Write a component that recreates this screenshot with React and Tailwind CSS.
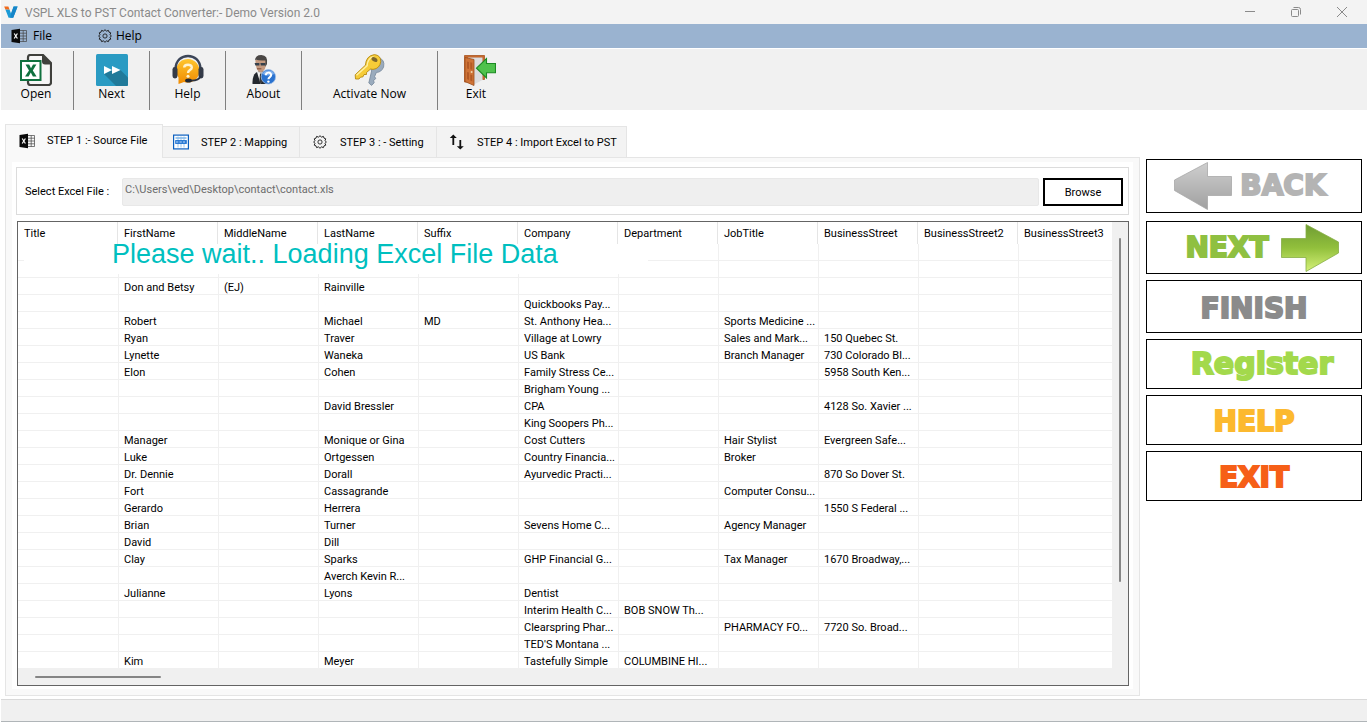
import React, { useState } from 'react';

const LogoIcon = () => (
	<svg viewBox="0 0 14 12" aria-hidden="true" className="h-3 w-3.5">
		<path d="M0.2 0.4H4.4L5.6 3.8L1.4 3.6z" fill="#f26a1b" />
		<path d="M1.4 3.6L5.6 3.8L7 7.6L9.6 0.6H13.6L9.2 11.8H4.6z" fill="#1b9ad6" />
		<path d="M9.6 0.6H13.6L9.2 11.8H6.2L7.4 7z" fill="#1685c8" />
	</svg>
);

const SheetIcon = () => (
	<svg viewBox="0 0 16 16" aria-hidden="true" className="h-4 w-4">
		<path d="M0.5 2L9 0.8V15.2L0.5 14z" fill="#0a0a0a" />
		<path d="M3.2 5.5L6.4 10.5M6.4 5.5L3.2 10.5" stroke="#fff" strokeWidth="1.2" />
		<path d="M9 2.5H15.5V13.5H9M9 5.2H15.5M9 8H15.5M9 10.8H15.5M12.2 2.5V13.5" fill="none" stroke="#444" strokeWidth="0.7" />
	</svg>
);

const GearIcon = () => (
	<svg viewBox="0 0 16 16" aria-hidden="true" className="h-3.5 w-3.5" fill="none" stroke="#1a1a1a">
		<path
			d="M8 0.8L9.7 2.4L11.9 1.6L12.6 3.6L14.6 4.4L13.8 6.4L15.2 8L13.8 9.6L14.6 11.6L12.6 12.4L11.9 14.4L9.7 13.6L8 15.2L6.3 13.6L4.1 14.4L3.4 12.4L1.4 11.6L2.2 9.6L0.8 8L2.2 6.4L1.4 4.4L3.4 3.6L4.1 1.6L6.3 2.4z"
			strokeWidth="1.1"
			strokeLinejoin="round"
		/>
		<circle cx="8" cy="8" r="2.4" strokeWidth="1" />
	</svg>
);

const MappingIcon = () => (
	<svg viewBox="0 0 16 15" aria-hidden="true" className="h-4 w-4">
		<rect x="0.6" y="0.6" width="14.8" height="13.8" fill="#fff" stroke="#0b5fbf" strokeWidth="1.2" />
		<path d="M2.5 3.5H13.5" stroke="#5aa2e2" strokeWidth="1.2" />
		<path d="M5 2V13M8 2V13M11 2V13" stroke="#8fc0ee" strokeWidth="0.9" />
		<rect x="2.2" y="5.6" width="11.6" height="3.8" fill="#1a6fd0" />
		<path d="M3 7.5H13" stroke="#cfe4fa" strokeWidth="1" strokeDasharray="2.4 1" />
	</svg>
);

const ArrowsIcon = () => (
	<svg viewBox="0 0 16 16" aria-hidden="true" className="h-4 w-4">
		<path d="M4.3 0.5L7.8 4H5.2V11H3.4V4H0.8z" fill="#111" />
		<path d="M11.3 15.5L14.8 12.2H12.2V6H10.4V12.2H7.8z" fill="#111" />
	</svg>
);

const OpenIcon = () => (
	<svg viewBox="0 0 32 32" aria-hidden="true" className="h-8 w-8">
		<path d="M8 6V3.5Q8 1 10.5 1H23L31 9V28.5Q31 31 28.5 31H10.5Q8 31 8 28.5V27" fill="#f6f6f6" stroke="#3f403c" strokeWidth="2.2" />
		<path d="M22 0.5L31.8 10.5H25Q22 10.5 22 7.5z" fill="#3f403c" />
		<rect x="1" y="7" width="19.5" height="19" fill="#fff" stroke="#10713f" strokeWidth="2" />
		<path d="M5.5 10.5H9.2L11 14.3L13 10.5H16.4L12.8 16.4L16.6 22.5H12.9L10.8 18.6L8.6 22.5H5L9 16.4z" fill="#10713f" />
	</svg>
);

const NextIcon = () => (
	<svg viewBox="0 0 32 32" aria-hidden="true" className="h-8 w-8">
		<rect width="32" height="32" rx="1.5" fill="#2a9bc3" />
		<path d="M8 20L16 16L24.5 16L32 23.5V30.5Q32 32 30.5 32H20z" fill="#217a9a" />
		<path d="M8 12L16 16L8 20zM16 12L24.5 16L16 20z" fill="#fff" />
	</svg>
);

const HeadsetIcon = () => (
	<svg viewBox="0 0 32 32" aria-hidden="true" className="h-8 w-8">
		<defs>
			<linearGradient id="bubble" x1="0" y1="0" x2="0" y2="1">
				<stop offset="0" stopColor="#ffc62e" />
				<stop offset="1" stopColor="#f08a00" />
			</linearGradient>
		</defs>
		<path d="M16 5A11.6 11.6 0 0 0 6.5 23.5L6.5 30L12 28A11.8 11.8 0 1 0 16 5z" fill="url(#bubble)" />
		<path d="M3.6 15C3.6 -2.4 28.4 -2.4 28.4 15" fill="none" stroke="#3b4558" strokeWidth="2.4" />
		<path d="M12.2 13.6C12.2 9.8 19.8 9.8 19.8 13.4C19.8 16.2 16 16 16 19" fill="none" stroke="#fff3cf" strokeWidth="2.4" />
		<circle cx="16" cy="22.2" r="1.5" fill="#fff3cf" />
		<rect x="0.5" y="13" width="5" height="11.5" rx="2.4" fill="#343b48" />
		<rect x="26.5" y="13" width="5" height="11.5" rx="2.4" fill="#343b48" />
		<path d="M28.5 22Q27 27 18 26.6" fill="none" stroke="#2c3340" strokeWidth="1.8" />
		<ellipse cx="16.5" cy="26.4" rx="3.4" ry="2" fill="#222833" />
	</svg>
);

const PersonIcon = () => (
	<svg viewBox="0 0 32 32" aria-hidden="true" className="ml-px h-8 w-8">
		<path d="M4.5 30Q4 18.5 11 17.5H17Q23 19 22 30z" fill="#23272e" />
		<path d="M9 18L12.6 30L17 18.5z" fill="#f4f4f4" />
		<path d="M12 19.5H13.8L14.2 27.5L12.8 30L11.4 27.5z" fill="#3a3a3a" />
		<path d="M7.4 6Q7.4 17 12.6 18.5Q18.6 17 18.2 6z" fill="#c49a80" />
		<path d="M7 6.6Q7 1 13.4 1Q20.2 1.2 19 10L17.4 13V6.4Q12 7 7 5.5z" fill="#4a4745" />
		<path d="M6.6 9H11.4V11.4H7.4zM12.4 9H17.4V11.4H12.8z" fill="#34404c" />
		<path d="M9 14.8H13.4" stroke="#7e4a38" strokeWidth="1" />
		<circle cx="20.4" cy="22.8" r="7.2" fill="#2a72cf" stroke="#9dbce6" strokeWidth="0.8" />
		<path d="M14.6 20Q16.4 16.6 20.4 16.6T26.2 20Q20.4 23 14.6 20z" fill="#7fb0ee" />
		<path d="M17.8 21.2C17.8 17.8 23.2 17.8 23.2 21C23.2 23.2 20.4 23 20.4 25.2" fill="none" stroke="#fff" strokeWidth="2" />
		<circle cx="20.4" cy="27.6" r="1.2" fill="#fff" />
	</svg>
);

const KeysIcon = () => (
	<svg viewBox="0 0 32 32" aria-hidden="true" className="h-8 w-8">
		<path d="M23 3Q31.4 5 29.6 13Q27.4 18.4 22.4 18.4L20.6 22.6L21.8 24.6L19.6 26.4L20.2 28.8L17.6 31.4L14.8 29L17.6 17L16 13z" fill="#9aabbd" stroke="#75879a" strokeWidth="0.8" />
		<path d="M20.4 0.6Q26.6 1.2 26.8 7.2Q26 14.6 19 15.4L16.6 15L12.5 18.5V20.5H10L9 22.8L6.5 23.2L5 25H1.5L1.2 20.8L11.4 11.2Q12 1.8 20.4 0.6z" fill="#f6cc38" stroke="#b78a12" strokeWidth="0.9" />
		<path d="M2.5 21.3L13.2 11.6Q13.4 4.4 19.5 2.6" fill="none" stroke="#fff0a0" strokeWidth="1.4" />
		<ellipse cx="20.5" cy="5.6" rx="3.2" ry="2" fill="#7d682c" transform="rotate(30 20.5 5.6)" />
	</svg>
);

const DoorIcon = () => (
	<svg viewBox="0 0 32 32" aria-hidden="true" className="ml-2 h-8 w-8">
		<path d="M0.5 1.5H20.5V25.5H18.5V4H4V28H0.5z" fill="#c7682c" stroke="#a85420" strokeWidth="0.8" />
		<path d="M4 3.6H18.5V26L10 30.5z" fill="#dcdcde" />
		<path d="M1 3.5L10 5.5V31.5L1 27.5z" fill="#cf7438" stroke="#9c4e1c" strokeWidth="0.8" />
		<path d="M3 7.5L5 8V15L3 14.6zM6.3 8.3L8.3 8.8V15.8L6.3 15.3zM3 18L5 18.6V26L3 25zM6.3 20.5L8.3 21V27.5L6.3 26.6z" fill="#b35a26" />
		<circle cx="7.6" cy="18" r="1" fill="#f2d9b0" />
		<path d="M12.5 14.2L22.5 4.5V9.5H31.5V18.8H22.5V24z" fill="#4fc24c" stroke="#1c8a23" strokeWidth="1.1" />
	</svg>
);

const BackArrow = () => (
	<svg viewBox="0 0 58 48" aria-hidden="true" className="h-12 w-[58px]">
		<defs>
			<linearGradient id="grayArrow" x1="0" y1="0" x2="0" y2="1">
				<stop offset="0" stopColor="#cfcfcf" />
				<stop offset="1" stopColor="#a0a0a0" />
			</linearGradient>
		</defs>
		<path d="M0.5 18L33.5 0.5V14.5H57.5V33.5H33.5V47.5L0.5 28.5z" fill="url(#grayArrow)" stroke="#a8a8a8" strokeWidth="0.8" />
	</svg>
);

const NextArrow = () => (
	<svg viewBox="0 0 58 48" aria-hidden="true" className="h-12 w-[58px]">
		<defs>
			<linearGradient id="greenArrow" x1="0" y1="0" x2="0" y2="1">
				<stop offset="0" stopColor="#6f9c33" />
				<stop offset="0.5" stopColor="#92c03c" />
				<stop offset="1" stopColor="#d6f27a" />
			</linearGradient>
		</defs>
		<path d="M57.5 18L25 0.5V14.5H0.5V33.5H25V47.5L57.5 29z" fill="url(#greenArrow)" stroke="#86ad45" strokeWidth="0.8" />
	</svg>
);

const tools = [
	{ label: 'Open', icon: OpenIcon, width: 'w-[73px] border-r pr-0.5' },
	{ label: 'Next', icon: NextIcon, width: 'w-[76px] border-r' },
	{ label: 'Help', icon: HeadsetIcon, width: 'w-[76px] border-r' },
	{ label: 'About', icon: PersonIcon, width: 'w-[76px] border-r' },
	{ label: 'Activate Now', icon: KeysIcon, width: 'w-[136px] border-r' },
	{ label: 'Exit', icon: DoorIcon, width: 'w-[76px]' },
];

const tabs = [
	{ label: 'STEP 1 :- Source File', icon: SheetIcon, width: 'w-[158px] pl-[13px]' },
	{ label: 'STEP 2 : Mapping', icon: MappingIcon, width: 'w-[137px] pl-2.5' },
	{ label: 'STEP 3 : - Setting', icon: GearIcon, width: 'w-[137px] pl-3' },
	{ label: 'STEP 4 : Import Excel to PST', icon: ArrowsIcon, width: 'w-[190px] pl-3' },
];

const columns = [
	'Title',
	'FirstName',
	'MiddleName',
	'LastName',
	'Suffix',
	'Company',
	'Department',
	'JobTitle',
	'BusinessStreet',
	'BusinessStreet2',
	'BusinessStreet3',
];

const contacts = [
	{},
	{},
	{ FirstName: 'Don and Betsy', MiddleName: '(EJ)', LastName: 'Rainville' },
	{ Company: 'Quickbooks Pay...' },
	{ FirstName: 'Robert', LastName: 'Michael', Suffix: 'MD', Company: 'St. Anthony Hea...', JobTitle: 'Sports Medicine ...' },
	{ FirstName: 'Ryan', LastName: 'Traver', Company: 'Village at Lowry', JobTitle: 'Sales and Mark...', BusinessStreet: '150 Quebec St.' },
	{ FirstName: 'Lynette', LastName: 'Waneka', Company: 'US Bank', JobTitle: 'Branch Manager', BusinessStreet: '730 Colorado Bl...' },
	{ FirstName: 'Elon', LastName: 'Cohen', Company: 'Family Stress Ce...', BusinessStreet: '5958 South Ken...' },
	{ Company: 'Brigham Young ...' },
	{ LastName: 'David Bressler', Company: 'CPA', BusinessStreet: '4128 So. Xavier ...' },
	{ Company: 'King Soopers Ph...' },
	{ FirstName: 'Manager', LastName: 'Monique or Gina', Company: 'Cost Cutters', JobTitle: 'Hair Stylist', BusinessStreet: 'Evergreen Safe...' },
	{ FirstName: 'Luke', LastName: 'Ortgessen', Company: 'Country Financia...', JobTitle: 'Broker' },
	{ FirstName: 'Dr. Dennie', LastName: 'Dorall', Company: 'Ayurvedic Practi...', BusinessStreet: '870 So Dover St.' },
	{ FirstName: 'Fort', LastName: 'Cassagrande', JobTitle: 'Computer Consu...' },
	{ FirstName: 'Gerardo', LastName: 'Herrera', BusinessStreet: '1550 S Federal ...' },
	{ FirstName: 'Brian', LastName: 'Turner', Company: 'Sevens Home C...', JobTitle: 'Agency Manager' },
	{ FirstName: 'David', LastName: 'Dill' },
	{ FirstName: 'Clay', LastName: 'Sparks', Company: 'GHP Financial G...', JobTitle: 'Tax Manager', BusinessStreet: '1670 Broadway,...' },
	{ LastName: 'Averch Kevin R...' },
	{ FirstName: 'Julianne', LastName: 'Lyons', Company: 'Dentist' },
	{ Company: 'Interim Health C...', Department: 'BOB SNOW Th...' },
	{ Company: 'Clearspring Phar...', JobTitle: 'PHARMACY FO...', BusinessStreet: '7720 So. Broad...' },
	{ Company: "TED'S Montana ..." },
	{ FirstName: 'Kim', LastName: 'Meyer', Company: 'Tastefully Simple', Department: 'COLUMBINE HI...' },
];

const TitleBar = () => (
	<header className="flex h-6 items-center bg-[#f3f3f3] pr-0.5 pl-[3px] font-[Roboto,sans-serif] text-xs text-[#8a8a8a]">
		<LogoIcon />
		<h1 className="ml-[7px] flex-1 pt-0.5">VSPL XLS to PST Contact Converter:- Demo Version 2.0</h1>
		<div className="flex">
			<button type="button" aria-label="Minimize" className="flex h-6 w-[46px] items-center justify-center">
				<svg viewBox="0 0 12 12" className="h-3 w-3" fill="none" stroke="#8a8a8a"><path d="M1 5.5H11" /></svg>
			</button>
			<button type="button" aria-label="Restore" className="flex h-6 w-[46px] items-center justify-center">
				<svg viewBox="0 0 12 12" className="h-3 w-3" fill="none" stroke="#8a8a8a">
					<rect x="1.5" y="3.5" width="7" height="7" rx="1" />
					<path d="M3.5 1.5H8.5Q10.5 1.5 10.5 3.5V8.5" />
				</svg>
			</button>
			<button type="button" aria-label="Close" className="flex h-6 w-[46px] items-center justify-center">
				<svg viewBox="0 0 12 12" className="h-3 w-3" fill="none" stroke="#8a8a8a"><path d="M1 1L11 11M11 1L1 11" /></svg>
			</button>
		</div>
	</header>
);

const MenuBar = () => (
	<nav className="flex h-6 bg-[#9ab3d0] pl-2.5 text-xs">
		<button type="button" className="flex w-[87px] items-center gap-1.5"><SheetIcon />File</button>
		<button type="button" className="flex items-center gap-1"><GearIcon />Help</button>
	</nav>
);

const ToolBar = () => (
	<div className="mt-px flex bg-[#f1f1f1] pt-0.5">
		{tools.map(({ label, icon: Icon, width }) => (
			<button
				key={label}
				type="button"
				className={`flex h-[59px] flex-col items-center border-[#808080] pt-[3px] text-xs leading-4 ${width}`}
			>
				<Icon />
				{label}
			</button>
		))}
	</div>
);

const ContactTable = () => (
	<div className="relative mt-1.5 ml-px border border-[#646464]">
		<div className="flex">
			<table className="min-w-0 flex-1 table-fixed border-separate border-spacing-0 text-left text-[11px]">
				<thead>
					<tr>
						{columns.map((name, i) => (
							<th
								key={name}
								scope="col"
								className={`h-[22px] p-0 pt-0.5 pl-1.5 font-normal ${i < 10 ? 'w-[100px] border-r border-[#e5e5e5]' : ''}`}
							>
								{name}
							</th>
						))}
					</tr>
				</thead>
				<tbody>
					{contacts.map((contact, row) => (
						<tr key={row}>
							{columns.map((name, i) => (
								<td
									key={name}
									className={`h-[17px] overflow-hidden border-b border-[#f0f0f0] p-0 pt-[3px] leading-[13px] whitespace-nowrap ${i ? 'border-l pl-[5px]' : 'pl-1.5'}`}
								>
									{contact[name]}
								</td>
							))}
						</tr>
					))}
				</tbody>
			</table>
			<div className="w-4 bg-[#f0f0f0] pt-4">
				<div className="mx-auto h-[344px] w-0.5 rounded bg-[#858585]" />
			</div>
		</div>
		<div className="flex h-4 items-center bg-[#f0f0f0] pl-[17px]">
			<div className="h-0.5 w-[126px] rounded bg-[#858585]" />
		</div>
		<p
			role="status"
			className="absolute top-[22px] left-1.5 h-[30px] w-[624px] bg-white pl-[88px] font-['Liberation_Sans',sans-serif] text-[27px] leading-5 text-[#00bfbf]"
		>
			Please wait.. Loading Excel File Data
		</p>
	</div>
);

const SourcePanel = () => {
	const [path, setPath] = useState('C:\\Users\\ved\\Desktop\\contact\\contact.xls');

	return (
		<section className="-mt-px border border-[#e5e5e5] bg-[#f9f9f9] px-1.5 pt-1 pb-1.5">
			<div className="bg-white px-1 pt-[5px] pb-[3px]">
				<div className="flex h-12 items-center border border-[#dcdcdc] pr-[5px] pl-2">
					<label htmlFor="excel-file" className="w-[97px] shrink-0 pt-0.5 text-[11px]">Select Excel File :</label>
					<input
						id="excel-file"
						type="text"
						value={path}
						onChange={(event) => setPath(event.target.value)}
						className="mt-0.5 h-7 min-w-0 flex-1 rounded-xs border border-[#e8e8e8] bg-[#efefef] px-0.5 pb-1.5 text-[11px] text-[#6d6d6d] outline-none"
					/>
					<button type="button" className="mt-0.5 ml-1 h-7 w-20 border-2 border-black bg-white pt-0.5 text-[11px]">Browse</button>
				</div>
				<ContactTable />
			</div>
		</section>
	);
};

const sideButton = "flex w-full items-center justify-center border border-black bg-white font-['DejaVu_Sans',sans-serif] leading-none font-bold [-webkit-text-stroke:2px_currentColor]";

const SideBar = () => (
	<aside className="flex w-[216px] shrink-0 flex-col gap-1.5 pt-[35px]">
		<button type="button" className={`${sideButton} mb-0.5 h-[54px] gap-2 pr-2 text-[28px] text-[#b4b4b4]`}><BackArrow />BACK</button>
		<button type="button" className={`${sideButton} h-[53px] gap-3 pl-4 text-[28px] text-[#8fc041]`}>NEXT<NextArrow /></button>
		<button type="button" className={`${sideButton} h-[53px] pt-1 text-[28px] text-[#8b8b8b]`}>FINISH</button>
		<button type="button" className={`${sideButton} h-[50px] pl-4 text-[30px] text-[#a3d94c]`}>Register</button>
		<button type="button" className={`${sideButton} h-[50px] pt-1 text-[28px] text-[#fcb92f]`}>HELP</button>
		<button type="button" className={`${sideButton} h-[50px] pt-1 text-[28px] text-[#f65f17]`}>EXIT</button>
	</aside>
);

export default function App() {
	const [activeTab, setActiveTab] = useState(0);

	return (
		<div className="flex min-h-screen flex-col bg-white px-px pb-px font-['Open_Sans',sans-serif] text-black">
			<TitleBar />
			<MenuBar />
			<ToolBar />
			<main className="flex flex-1 gap-1.5 pt-3.5 pr-[5px] pl-1 font-[Roboto,sans-serif]">
				<div className="min-w-0 flex-1">
					<div role="tablist" className="flex items-end">
						{tabs.map(({ label, icon: Icon, width }, i) => (
							<button
								key={label}
								type="button"
								role="tab"
								aria-selected={activeTab === i}
								onClick={() => setActiveTab(i)}
								className={`flex items-center gap-3 border border-[#e5e5e5] text-[11px] whitespace-nowrap ${width} ${activeTab === i ? 'relative h-[34px] border-b-0 bg-[#f9f9f9] pb-0.5' : 'h-8 border-l-0 bg-[#f3f3f3]'}`}
							>
								<span className="flex w-4 justify-center"><Icon /></span>
								<span className="pt-0.5">{label}</span>
							</button>
						))}
					</div>
					<SourcePanel />
				</div>
				<SideBar />
			</main>
			<footer className="mt-[3px] h-[23px] border-t border-b border-t-[#d9d9d9] border-b-[#b0b5b8] bg-[#f0f0f0]" />
		</div>
	);
}
